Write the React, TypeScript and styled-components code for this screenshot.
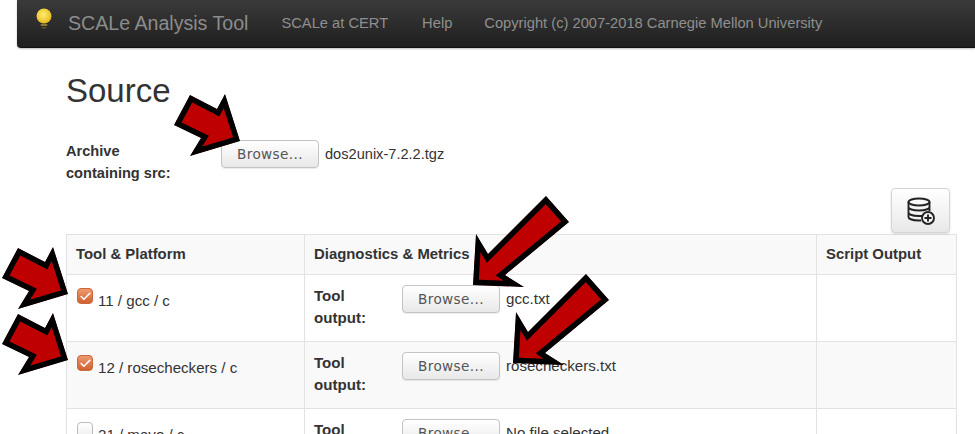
import { createGlobalStyle, styled } from 'styled-components'
import { Check } from 'lucide-react'

const GlobalStyle = createGlobalStyle`
  html, body {
    margin: 0;
    height: 434px;
    overflow: hidden;
    background: #fff;
    font-family: "Liberation Sans", Arial, sans-serif;
    font-size: 14.6px;
    line-height: 21px;
    color: #333;
  }
`

const Page = styled.div`
  position: relative;
  width: 975px;
  height: 434px;
  overflow: hidden;
`

const Navbar = styled.nav`
  display: flex;
  align-items: center;
  height: 48px;
  margin-left: 17px;
  padding-left: 17px;
  background: linear-gradient(#3a3a3a, #1f1f1f);
  border-bottom: 1px solid #111;
  border-bottom-left-radius: 4px;
  box-sizing: border-box;
  box-shadow: 0 1px 2px rgba(0, 0, 0, 0.25);
`

const Bulb = styled.svg`
  width: 20px;
  height: 24px;
  margin-right: 14px;
  margin-bottom: 10px;
`

const Brand = styled.a`
  font-size: 19.6px;
  color: #8c8c8c;
  margin-right: 33px;
`

const NavLink = styled.a<{ $gap?: number }>`
  font-size: 14.7px;
  color: #8f8f8f;
  margin-right: ${(p) => p.$gap ?? 34}px;
`

const Content = styled.main`
  padding: 0 19px 0 66px;
`

const Title = styled.h1`
  margin: 22px 0 0;
  font-size: 33px;
  line-height: 42px;
  font-weight: 400;
  color: #333;
`

const UploadRow = styled.div`
  display: flex;
  align-items: flex-start;
  margin-top: 28px;
`

const FieldLabel = styled.label<{ $width: number }>`
  width: ${(p) => p.$width}px;
  flex: none;
  font-weight: 700;
  line-height: 22px;
`

const Browse = styled.button`
  flex: none;
  width: 98px;
  height: 28px;
  padding: 0;
  font-family: "DejaVu Sans", sans-serif;
  font-size: 13.6px;
  letter-spacing: 0.4px;
  color: #555;
  background: linear-gradient(#fff, #e8e8e8);
  border: 1px solid #c4c4c4;
  border-radius: 4px;
  box-shadow: 0 1px 1px rgba(0, 0, 0, 0.08);
`

const FileName = styled.span`
  margin-left: 6px;
  line-height: 28px;
`

const Toolbar = styled.div`
  display: flex;
  justify-content: flex-end;
  margin-top: 4px;
  padding-right: 6px;
`

const IconButton = styled.button`
  width: 59px;
  height: 45px;
  padding: 0;
  background: linear-gradient(#fff, #e8e8e8);
  border: 1px solid #d4d4d4;
  border-radius: 4px;
  box-shadow: 0 1px 2px rgba(0, 0, 0, 0.15);
  display: flex;
  align-items: center;
  justify-content: center;
`

const Table = styled.table`
  width: 890px;
  table-layout: fixed;
  border-collapse: collapse;
  margin-top: 1px;
  border: 1px solid #ddd;
  font-size: 15.1px;
`

const HeadCell = styled.th<{ $width: number }>`
  width: ${(p) => p.$width}px;
  height: 40px;
  padding: 0 9px;
  box-sizing: border-box;
  text-align: left;
  font-size: 14.9px;
  background: #f9f9f9;
  border: 1px solid #e2e2e2;
  font-weight: 700;
`

const Row = styled.tr<{ $striped?: boolean }>`
  background: ${(p) => (p.$striped ? '#f9f9f9' : '#fff')};
`

const Cell = styled.td`
  height: 67px;
  padding: 10px 9px 0;
  box-sizing: border-box;
  vertical-align: top;
  border: 1px solid #e2e2e2;
`

const ToolLine = styled.div`
  display: flex;
  align-items: flex-start;
  margin-top: 3px;
  margin-left: 1px;
`

const Box = styled.span<{ $checked?: boolean }>`
  flex: none;
  width: 16px;
  height: 16px;
  margin-right: 5px;
  border-radius: 4px;
  display: flex;
  align-items: center;
  justify-content: center;
  box-sizing: border-box;
  color: #fff;
  background: ${(p) => (p.$checked ? 'linear-gradient(#ee9a70, #d0602f)' : 'linear-gradient(#fff, #eee)')};
  border: 1px solid ${(p) => (p.$checked ? '#c9683a' : '#bbb')};
`

const ToolText = styled.span`
  margin-top: 2px;
`

const OutputLine = styled.div`
  display: flex;
  align-items: flex-start;
`

const ArrowSvg = styled.svg<{ $x: number; $y: number }>`
  position: absolute;
  left: ${(p) => p.$x}px;
  top: ${(p) => p.$y}px;
  overflow: visible;
`

const SMALL = '16,1 0,31 27,44 16,62 66,47 51,0 43,15'
const BIG = '73,0 96,26 32,79 51,91 0,89 3,38 15,58'

function Arrow({ id, x, y, points, w, h }: { id: string; x: number; y: number; points: string; w: number; h: number }) {
  return (
    <ArrowSvg $x={x} $y={y} width={w} height={h} viewBox={`0 0 ${w} ${h}`}>
      <clipPath id={id}>
        <polygon points={points} />
      </clipPath>
      <polygon points={points} fill="#bf0000" stroke="#000" strokeWidth="11" strokeLinejoin="miter" strokeMiterlimit="10" clipPath={`url(#${id})`} />
    </ArrowSvg>
  )
}

function FileField({ name }: { name: string }) {
  return (
    <OutputLine>
      <FieldLabel $width={88}>Tool<br />output:</FieldLabel>
      <Browse type="button">Browse...</Browse>
      <FileName>{name}</FileName>
    </OutputLine>
  )
}

const rows = [
  { label: '11 / gcc / c', file: 'gcc.txt', checked: true },
  { label: '12 / rosecheckers / c', file: 'rosecheckers.txt', checked: true },
  { label: '21 / mayo / c', file: 'No file selected', checked: false },
]

export default function App() {
  return (
    <>
      <GlobalStyle />
      <Page>
        <Navbar>
          <Bulb viewBox="0 0 20 24">
            <defs>
              <radialGradient id="bulb" cx="45%" cy="40%" r="60%">
                <stop offset="0%" stopColor="#ffef70" />
                <stop offset="100%" stopColor="#e8b81e" />
              </radialGradient>
            </defs>
            <circle cx="10" cy="9" r="7.500" fill="url(#bulb)" />
            <rect x="6.500" y="17" width="7" height="2" rx="1" fill="#8a7a3a" />
            <rect x="7.500" y="20" width="5" height="1.500" rx="0.700" fill="#5a5030" />
          </Bulb>
          <Brand>SCALe Analysis Tool</Brand>
          <NavLink>SCALe at CERT</NavLink>
          <NavLink $gap={32}>Help</NavLink>
          <NavLink>Copyright (c) 2007-2018 Carnegie Mellon University</NavLink>
        </Navbar>
        <Content>
          <Title>Source</Title>
          <UploadRow>
            <FieldLabel $width={155}>Archive<br />containing src:</FieldLabel>
            <Browse type="button">Browse...</Browse>
            <FileName>dos2unix-7.2.2.tgz</FileName>
          </UploadRow>
          <Toolbar>
            <IconButton type="button" aria-label="Add database">
              <svg width="30" height="30" viewBox="0 0 30 30" fill="none" stroke="#222" strokeWidth="1.900">
                <ellipse cx="13" cy="6" rx="10.500" ry="3.500" />
                <path d="M2.500 6v15c0 2 4.500 3.500 10.500 3.500h2M23.500 6v9M2.500 11c0 2 4.500 3.500 10.500 3.500s10.500-1.500 10.500-3.500M2.500 16.500c0 2 4.500 3.500 10.500 3.500h3" />
                <circle cx="22" cy="22" r="6" fill="#f4f4f4" />
                <path d="M22 18.500v7M18.500 22h7" />
              </svg>
            </IconButton>
          </Toolbar>
          <Table>
            <thead>
              <tr>
                <HeadCell $width={238}>Tool &amp; Platform</HeadCell>
                <HeadCell $width={512}>Diagnostics &amp; Metrics</HeadCell>
                <HeadCell $width={140}>Script Output</HeadCell>
              </tr>
            </thead>
            <tbody>
              {rows.map((row, i) => (
                <Row key={row.label} $striped={i % 2 === 1}>
                  <Cell>
                    <ToolLine>
                      <Box $checked={row.checked}>{row.checked && <Check size={13} strokeWidth={3} />}</Box>
                      <ToolText>{row.label}</ToolText>
                    </ToolLine>
                  </Cell>
                  <Cell>
                    <FileField name={row.file} />
                  </Cell>
                  <Cell />
                </Row>
              ))}
            </tbody>
          </Table>
        </Content>
        <Arrow id="a1" x={174} y={94} points={SMALL} w={67} h={64} />
        <Arrow id="a2" x={2} y={247} points={SMALL} w={67} h={64} />
        <Arrow id="a3" x={2} y={313} points={SMALL} w={67} h={64} />
        <Arrow id="a4" x={473} y={196} points={BIG} w={97} h={92} />
        <Arrow id="a5" x={513} y={274} points={BIG} w={97} h={92} />
      </Page>
    </>
  )
}
